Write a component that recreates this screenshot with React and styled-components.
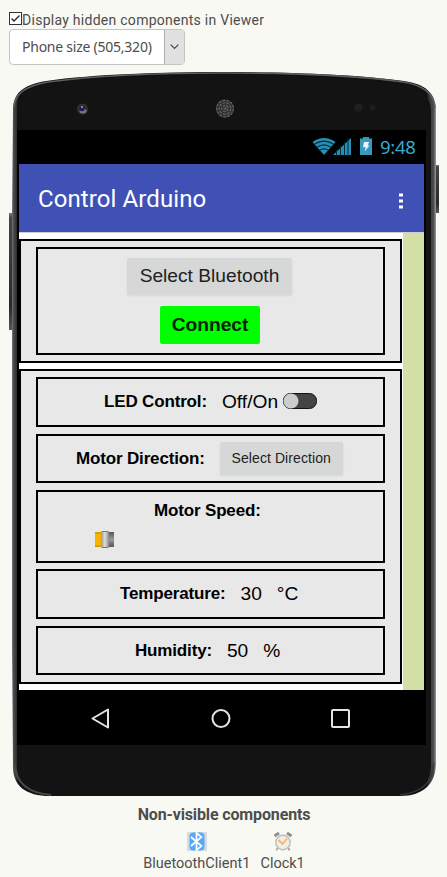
import React from "react";
import styled, { createGlobalStyle } from "styled-components";

const GlobalStyle = createGlobalStyle`
  *, *::before, *::after { box-sizing: border-box; }
  body { margin: 0; background: #f8f9f3; }
`;

const Viewer = styled.main`
  width: 447px;
  height: 877px;
  padding-top: 11px;
  overflow: hidden;
  background: #f8f9f3;
  color: #4d4d4d;
  font-family: Roboto, sans-serif;
`;

const HiddenToggle = styled.label`
  display: flex;
  height: 18px;
  margin-left: 9px;
  font-size: 14px;
  line-height: 18px;
  letter-spacing: 0.27px;
  white-space: nowrap;
`;

const CheckIcon = styled.svg`
  width: 13px;
  height: 13px;
  margin-top: 1px;
`;

const SizeSelect = styled.div`
  display: flex;
  width: 176px;
  height: 36px;
  margin-left: 9px;
  border: 1px solid #c4c4c4;
  border-radius: 4px;
  overflow: hidden;
  background: #fff;
`;

const SizeValue = styled.span`
  flex: 1;
  padding-left: 12px;
  font: 14px/34px "Noto Sans", sans-serif;
  letter-spacing: -0.24px;
  white-space: nowrap;
`;

const SelectArrow = styled.span`
  display: flex;
  align-items: center;
  justify-content: center;
  width: 20px;
  border-left: 1px solid #adadad;
  background: #e1e1e1;
`;

const Phone = styled.section`
  position: relative;
  height: 731px;
  padding: 65px 21px 0 17px;
`;

const PhoneShell = styled.svg`
  position: absolute;
  left: 0;
  top: 0;
`;

const Display = styled.div`
  position: relative;
  width: 409px;
  height: 615px;
  padding: 0 2px;
  background: #000;
`;

const StatusBar = styled.div`
  display: flex;
  height: 34px;
  padding: 0 6px 0 293px;
  color: #35a9d2;
`;

const Time = styled.span`
  margin-left: 6px;
  font: 18.6px/33px "Noto Sans", sans-serif;
  letter-spacing: -0.3px;
`;

const TitleBar = styled.header`
  display: flex;
  justify-content: space-between;
  height: 69px;
  padding: 0 20px 0 19px;
  border-bottom: 1px solid #cfcfd6;
  background: #3f51b5;
  color: #fff;
  font-size: 24px;
  line-height: 70px;
  letter-spacing: 0.1px;
`;

const MoreDots = styled.svg`
  width: 6px;
  height: 18px;
  margin-top: 28px;
`;

const Canvas = styled.div`
  display: flex;
  height: 457px;
  background: #d2e0a6;
`;

const Form = styled.div`
  display: flex;
  flex-direction: column;
  gap: 6px;
  width: 384px;
  padding: 6px 1px 6px 0;
  background: #fff;
`;

const Group = styled.div`
  display: grid;
  flex: none;
  grid-template-rows: ${(p) => p.$rows};
  row-gap: 7px;
  padding: 6px 15px ${(p) => p.$bottom || "6px"};
  border: 2px solid #000;
  background: #e8e8e8;
`;

const Panel = styled.div`
  display: flex;
  flex-direction: ${(p) => (p.$column ? "column" : "row")};
  align-items: ${(p) => (p.$column ? "flex-start" : "center")};
  padding: ${(p) => p.$pad || 0};
  margin-top: ${(p) => p.$shift || 0};
  border: 2px solid #000;
  color: #000;
`;

const Label = styled.span`
  margin-left: ${(p) => p.$indent || 0};
  font: 700 17px/20px "Liberation Sans", sans-serif;
  letter-spacing: -0.16px;
  white-space: nowrap;
`;

const Value = styled.span`
  margin-left: 15px;
  font: 19.2px/22px "Liberation Sans", sans-serif;
  white-space: nowrap;
`;

const Button = styled.button`
  display: flex;
  align-items: center;
  justify-content: center;
  flex: none;
  width: ${(p) => p.$w};
  height: ${(p) => p.$h};
  margin: ${(p) => p.$margin || 0};
  padding: 0 0 ${(p) => p.$lift || 0};
  border: 0;
  border-radius: 2px;
  background: ${(p) => (p.$active ? "#00ff00" : "#d6d8d7")};
  box-shadow: ${(p) => (p.$active ? "none" : "0 1px 2px rgba(0,0,0,0.08)")};
  color: ${(p) => (p.$active ? "#062006" : "#212121")};
  font: ${(p) => (p.$active ? 700 : 400)} ${(p) => p.$size || "19.2px"}/1 "Liberation Sans", sans-serif;
  letter-spacing: ${(p) => p.$tracking || "0"};
  white-space: nowrap;
`;

const Switch = styled.svg`
  margin: -3px 0 0 5px;
`;

const SliderThumb = styled.svg`
  margin: 10px 0 0 57px;
`;

const NavBar = styled.nav`
  display: flex;
  justify-content: space-between;
  height: 55px;
  padding: 17px 72px 0 71px;
`;

const Components = styled.footer`
  display: flex;
  flex-direction: column;
  align-items: center;
  padding-left: 1px;
`;

const ComponentsTitle = styled.h2`
  margin: 9px 0 7px;
  font-size: 16px;
  font-weight: 700;
  line-height: 20px;
  letter-spacing: -0.14px;
`;

const ComponentList = styled.div`
  display: flex;
  gap: 10px;
`;

const ComponentItem = styled.div`
  display: flex;
  flex-direction: column;
  align-items: center;
  gap: 4px;
  font-size: 14.5px;
  line-height: 18px;
`;

function Shell() {
  return (
    <PhoneShell width="447" height="731" viewBox="0 65 447 731">
      <defs>
        <linearGradient id="rim" x1="0" x2="1" y1="0" y2="0">
          <stop offset="0" stopColor="#77797a" />
          <stop offset="0.004" stopColor="#48494b" />
          <stop offset="0.01" stopColor="#343537" />
          <stop offset="0.015" stopColor="#111" />
          <stop offset="0.978" stopColor="#111" />
          <stop offset="0.984" stopColor="#39393c" />
          <stop offset="0.994" stopColor="#4a4a4d" />
          <stop offset="1" stopColor="#9a9b9b" />
        </linearGradient>
        <linearGradient id="key" x1="0" x2="0" y1="0" y2="1">
          <stop offset="0" stopColor="#77797a" />
          <stop offset="0.04" stopColor="#454545" />
          <stop offset="0.8" stopColor="#292929" />
          <stop offset="1" stopColor="#555" />
        </linearGradient>
      </defs>
      <rect x="9" y="213" width="4" height="117" fill="url(#key)" />
      <rect x="435" y="165" width="4" height="48" fill="url(#key)" />
      <path d="M13 110C13 94 22 85 46 81C94 74 164 72 224 72S354 74 404 81C426 84 436 94 436 110V763C436 783 424 796 400 796H50C26 796 13 786 13 767L12 650V213Z" fill="url(#rim)" />
      <path d="M17 125V111C17 96 26 88 49 84C99 77 166 75 224 75S350 77 402 84C422 87 431 97 431 112V765C431 782 422 793 398 796H50C26 793 17 783 17 765Z" fill="#131313" />
      <path d="M14 107C15 94 25 86 48 82C100 75 165 73 224 73S352 75 403 82C423 85 434 94 435 108" fill="none" stroke="#5b5d5e" strokeWidth="1.6" />
      <path d="M15 765C16 783 27 793 51 795" fill="none" stroke="#48494a" strokeWidth="2" />
      <path d="M434 763C432 782 424 792 400 795" fill="none" stroke="#36373a" strokeWidth="1.5" />
      <circle cx="82.500" cy="109" r="5.500" fill="#303030" />
      <ellipse cx="83" cy="111" rx="3.500" ry="2.500" fill="#777" />
      <circle cx="82" cy="108.500" r="2.800" fill="#20204d" />
      <circle cx="82" cy="107" r="1" fill="#aaa" />
      <circle cx="225" cy="108.500" r="9" fill="#2e2e2e" />
      <g fill="none" stroke="#606060" strokeWidth="1.300" strokeDasharray="3 1">
        <circle cx="225" cy="108.500" r="8.300" />
        <circle cx="225" cy="108.500" r="5.800" />
        <circle cx="225" cy="108.500" r="3.200" />
        <circle cx="225" cy="108.500" r="1" />
      </g>
      <circle cx="358.500" cy="107.500" r="4" fill="#1f1f1f" />
      <circle cx="372.500" cy="107.500" r="3" fill="#1d1d1d" />
    </PhoneShell>
  );
}

function StatusIcons() {
  return (
    <svg width="62" height="34" viewBox="312 130 62 34">
      <path d="M312.500 142Q324 134 335.500 142L324 155Z" fill="#278eb5" />
      <path d="M314.500 144.300Q324 137.800 333.500 144.300M317 147.300Q324 142.500 331 147.300M319.500 150.300Q324 147.500 328.500 150.300" fill="none" stroke="#062b38" strokeWidth="1.200" />
      <path d="M333 155L351 138V155Z" fill="#278eb5" />
      <path d="M336.500 150V156M340.500 146V156M344.500 142V156M348 138V156" stroke="#062b38" strokeWidth="1" />
      <path d="M360 138.500H363V137H369V138.500H372V155H360Z" fill="#3798c0" />
      <path d="M364 142H369L367.800 145.500H369.500L364.500 151.500L365.800 147.300H363Z" fill="#e8f5fa" />
    </svg>
  );
}

export default function App() {
  return (
    <>
      <GlobalStyle />
      <Viewer>
        <HiddenToggle>
          <CheckIcon viewBox="0 0 13 13">
            <rect x="0.500" y="0.500" width="12" height="12" fill="#fff" stroke="#333" />
            <path d="M2.500 6.500L5 9L10.500 3.500" fill="none" stroke="#222" strokeWidth="1.300" />
          </CheckIcon>
          Display hidden components in Viewer
        </HiddenToggle>
        <SizeSelect>
          <SizeValue>Phone size (505,320)</SizeValue>
          <SelectArrow>
            <svg width="9" height="6" viewBox="0 0 9 6">
              <path d="M0.700 0.700L4.500 4.500L8.300 0.700" fill="none" stroke="#444" strokeWidth="1.200" />
            </svg>
          </SelectArrow>
        </SizeSelect>
        <Phone>
          <Shell />
          <Display>
            <StatusBar>
              <StatusIcons />
              <Time>9:48</Time>
            </StatusBar>
            <TitleBar>
              Control Arduino
              <MoreDots viewBox="0 0 6 18">
                <path d="M1 1.500H5V4.500H1ZM1 7.500H5V10.500H1ZM1 13.500H5V16.500H1Z" fill="#fff" />
              </MoreDots>
            </TitleBar>
            <Canvas>
              <Form>
                <Group $rows="108px">
                  <Panel $column>
                    <Button $w="165px" $h="37px" $lift="2px" $margin="9px 0 0 89px">Select Bluetooth</Button>
                    <Button $active $w="100px" $h="38px" $margin="11px 0 0 122px">Connect</Button>
                  </Panel>
                </Group>
                <Group $rows="50px 49px 73px 49px 49px" $bottom="7px">
                  <Panel $pad="0 0 0 66px">
                    <Label>LED Control:</Label>
                    <Value>Off/On</Value>
                    <Switch width="34" height="16" viewBox="0 0 34 16">
                      <rect x="0.500" y="0.500" width="33" height="15" rx="7" fill="#444" stroke="#111" />
                      <circle cx="8" cy="8" r="7.500" fill="#ccc" />
                    </Switch>
                  </Panel>
                  <Panel $pad="0 0 0 38px">
                    <Label>Motor Direction:</Label>
                    <Button $w="123px" $h="33px" $lift="1px" $size="14px" $tracking="0.08px" $margin="0 0 0 15px">Select Direction</Button>
                  </Panel>
                  <Panel $column $pad="9px 0 0">
                    <Label $indent="116px">Motor Speed:</Label>
                    <SliderThumb width="19" height="18" viewBox="0 0 19 18">
                      <defs>
                        <linearGradient id="cap" x1="0" x2="1" y1="0" y2="0">
                          <stop offset="0" stopColor="#999" />
                          <stop offset="0.500" stopColor="#dedede" />
                          <stop offset="1" stopColor="#888" />
                        </linearGradient>
                        <linearGradient id="track" x1="0" x2="0" y1="0" y2="1">
                          <stop offset="0" stopColor="#555" />
                          <stop offset="0.500" stopColor="#999" />
                          <stop offset="1" stopColor="#555" />
                        </linearGradient>
                      </defs>
                      <rect y="1" width="7" height="15" fill="#f5b400" />
                      <path d="M0 2H6M0 15H6" stroke="#bd8900" />
                      <rect x="13" y="1" width="6" height="15" fill="url(#track)" />
                      <rect x="6" y="0" width="8" height="17" rx="1" fill="url(#cap)" />
                      <path d="M7 0.500H13M7 16.500H13" stroke="#777" />
                    </SliderThumb>
                  </Panel>
                  <Panel $pad="0 0 0 82px" $shift="-1px">
                    <Label>Temperature:</Label>
                    <Value>30</Value>
                    <Value>°C</Value>
                  </Panel>
                  <Panel $pad="0 0 0 97px">
                    <Label>Humidity:</Label>
                    <Value>50</Value>
                    <Value>%</Value>
                  </Panel>
                </Group>
              </Form>
            </Canvas>
            <NavBar>
              <svg width="22" height="22" viewBox="0 0 22 22" fill="none" stroke="#e4e4e4" strokeWidth="2">
                <path d="M2.500 11.500L18 2.500V20.500Z" strokeLinejoin="round" />
              </svg>
              <svg width="22" height="22" viewBox="0 0 22 22" fill="none" stroke="#e4e4e4" strokeWidth="2">
                <circle cx="11" cy="11.500" r="8.500" />
              </svg>
              <svg width="22" height="22" viewBox="0 0 22 22" fill="none" stroke="#e4e4e4" strokeWidth="2">
                <rect x="2" y="3" width="17" height="17" rx="1" />
              </svg>
            </NavBar>
          </Display>
        </Phone>
        <Components>
          <ComponentsTitle>Non-visible components</ComponentsTitle>
          <ComponentList>
            <ComponentItem>
              <svg width="20" height="19" viewBox="0 0 20 19">
                <rect width="20" height="19" fill="#d9dadb" />
                <rect x="2.500" y="0.500" width="15" height="18" rx="4" fill="#56a8fb" />
                <path d="M4 5L14.500 14L9.500 18V1L14.500 5L4 14" fill="none" stroke="#fff" strokeWidth="1.700" />
              </svg>
              BluetoothClient1
            </ComponentItem>
            <ComponentItem>
              <svg width="20" height="19" viewBox="0 0 20 19">
                <path d="M1.500 4L6 1M14 1L18.500 4" stroke="#909090" strokeWidth="3" />
                <path d="M4.500 16L3.500 18.500M15.500 16L16.500 18.500" stroke="#999" strokeWidth="1.500" />
                <circle cx="10" cy="10.500" r="7.200" fill="#eee" stroke="#bdbdbd" strokeWidth="1.400" />
                <path d="M5.500 8L9.500 12L14 6.500" fill="none" stroke="#f5b75f" strokeWidth="1.800" />
              </svg>
              Clock1
            </ComponentItem>
          </ComponentList>
        </Components>
      </Viewer>
    </>
  );
}
